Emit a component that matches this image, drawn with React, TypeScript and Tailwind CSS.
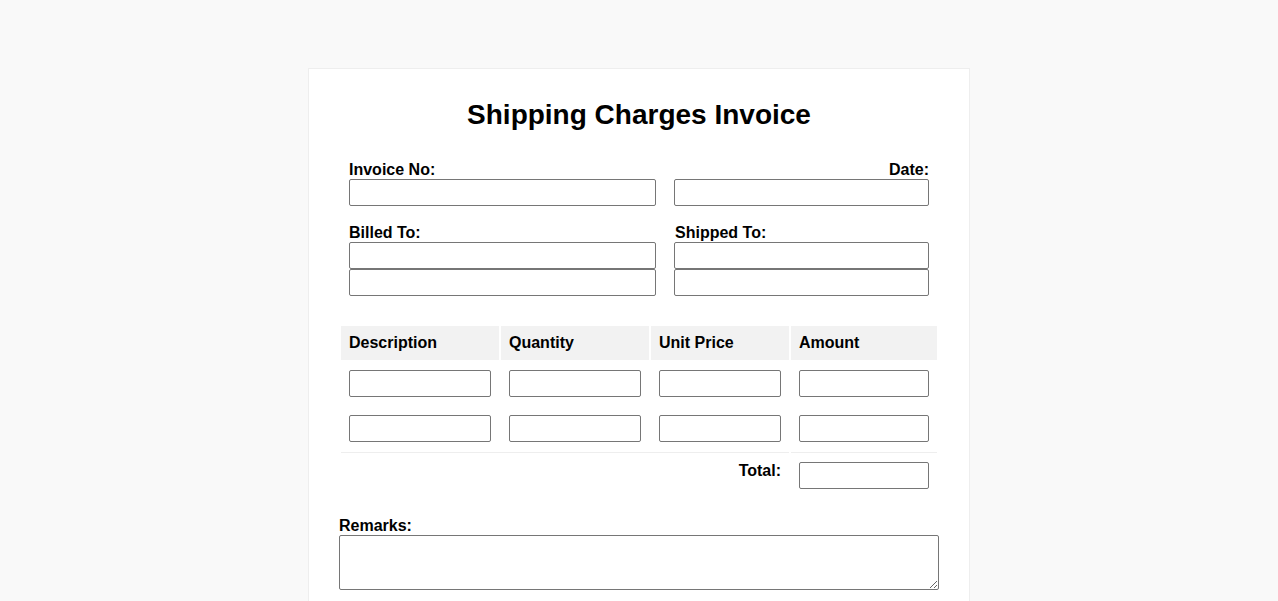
import React from "react"

const inputCls = "block w-full h-[27px] border border-[#767676] rounded-[2px] bg-white"

export default function App() {
    return (
        <div className="min-h-screen bg-[#f9f9f9] pt-[68px] font-['Liberation_Sans',Arial,sans-serif] text-black">
            <div className="mx-auto w-[662px] border border-[#eeeeee] bg-white px-[30px] pt-[30px] pb-[30px]">
                <h1 className="text-center text-[28px] font-bold leading-[32px]">Shipping Charges Invoice</h1>

                {/* header fields */}
                <table className="mt-[20px] w-full border-separate border-spacing-[2px] text-[16px]">
                    <tbody>
                        <tr>
                            <td className="w-[323px] p-[8px] align-top">
                                <div className="font-bold leading-[18px]">Invoice No:</div>
                                <input className={inputCls} />
                            </td>
                            <td className="p-[8px] align-top">
                                <div className="text-right font-bold leading-[18px]">Date:</div>
                                <input className={inputCls} />
                            </td>
                        </tr>
                        <tr>
                            <td className="p-[8px] align-top">
                                <div className="font-bold leading-[18px]">Billed To:</div>
                                <input className={inputCls} />
                                <input className={inputCls} />
                            </td>
                            <td className="p-[8px] align-top">
                                <div className="pl-[1px] font-bold leading-[18px]">Shipped To:</div>
                                <input className={inputCls} />
                                <input className={inputCls} />
                            </td>
                        </tr>
                    </tbody>
                </table>

                {/* line items */}
                <table className="mt-[18px] w-full border-separate border-spacing-[2px] text-[16px]">
                    <thead>
                        <tr className="bg-[#f2f2f2] text-left">
                            <th className="w-[158px] p-[8px] font-bold leading-[18px]">Description</th>
                            <th className="w-[148px] p-[8px] font-bold leading-[18px]">Quantity</th>
                            <th className="w-[138px] p-[8px] font-bold leading-[18px]">Unit Price</th>
                            <th className="p-[8px] font-bold leading-[18px]">Amount</th>
                        </tr>
                    </thead>
                    <tbody>
                        {[0, 1].map((i) => (
                            <tr key={i}>
                                <td className="p-[8px]"><input className={inputCls} /></td>
                                <td className="p-[8px]"><input className={inputCls} /></td>
                                <td className="p-[8px]"><input className={inputCls} /></td>
                                <td className="p-[8px]"><input className={inputCls} /></td>
                            </tr>
                        ))}
                        <tr>
                            <td colSpan={3} className="border-t border-[#eeeeee] p-[8px] pt-[9px] text-right align-top font-bold leading-[18px]">Total:</td>
                            <td className="border-t border-[#eeeeee] p-[8px] pt-[9px]"><input className={inputCls} /></td>
                        </tr>
                    </tbody>
                </table>

                <div className="mt-[18px] font-bold leading-[18px]">Remarks:</div>
                <textarea className="block h-[55px] w-full rounded-[2px] border border-[#767676] bg-white" />
            </div>
        </div>
    )
}
